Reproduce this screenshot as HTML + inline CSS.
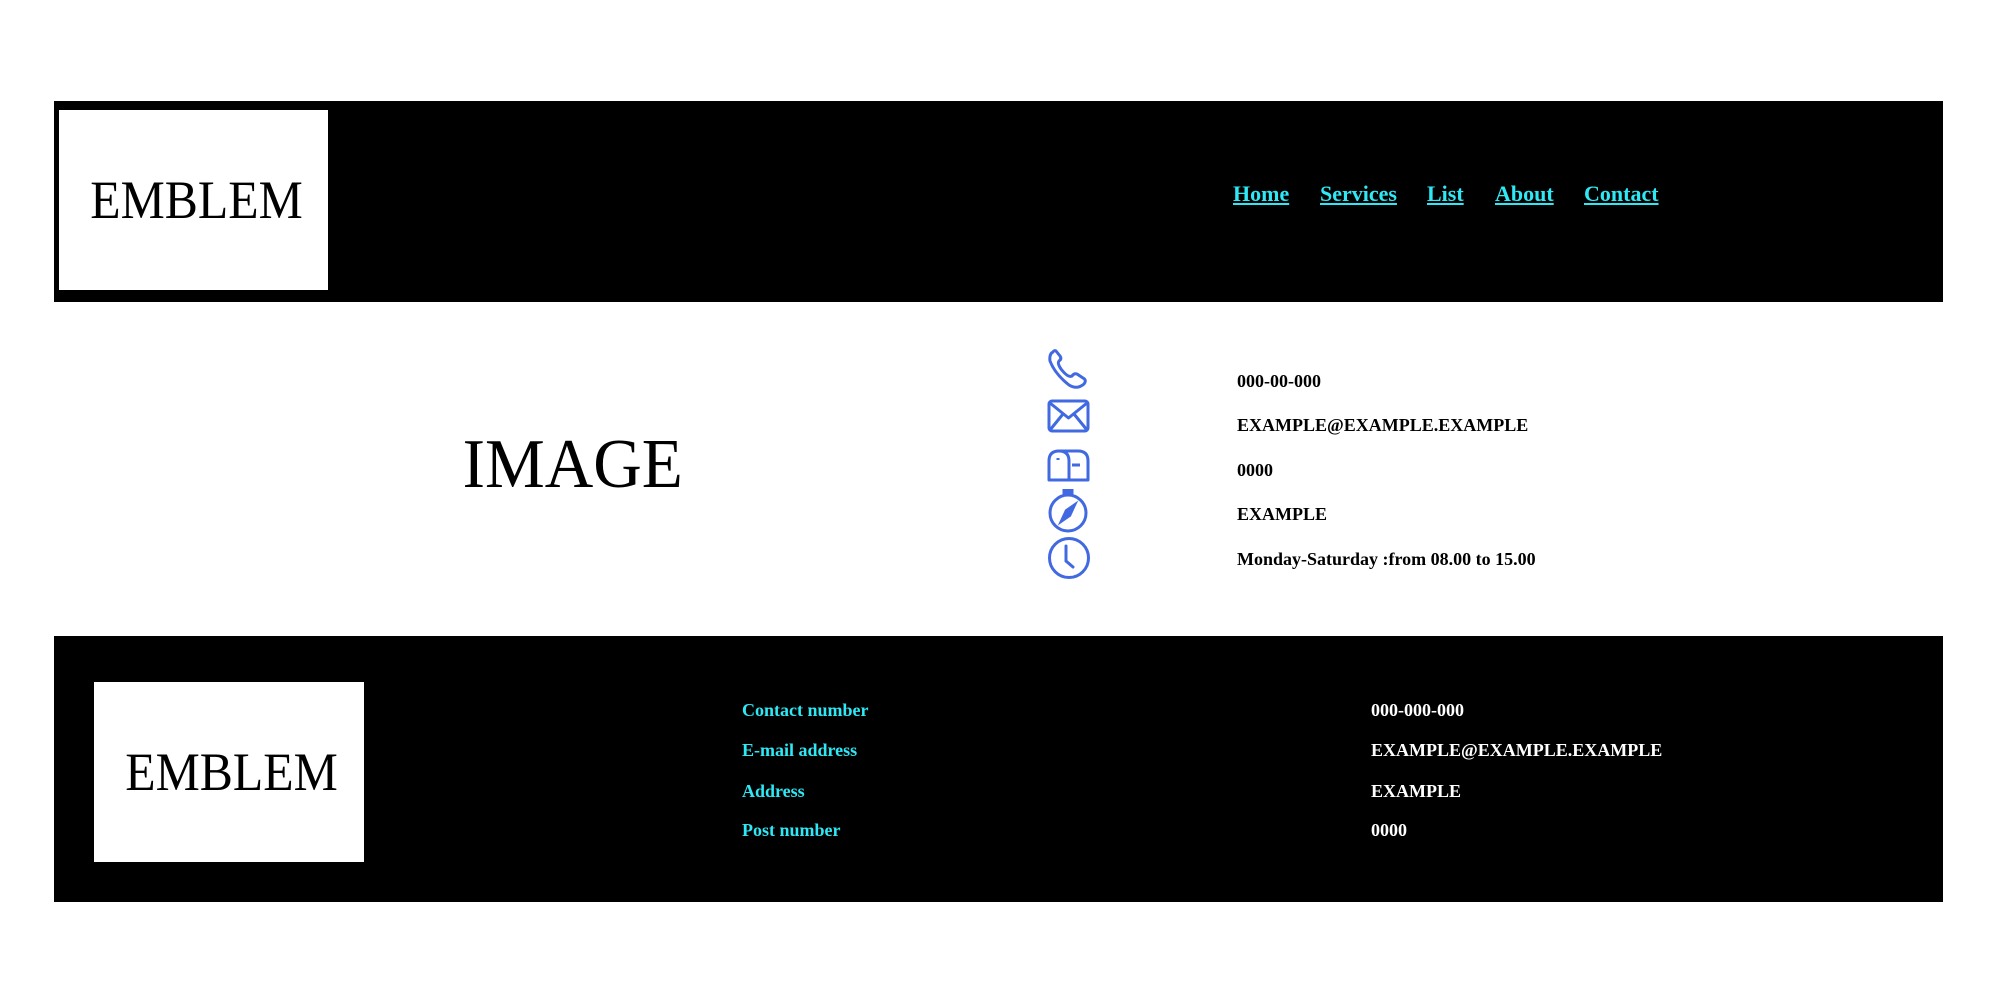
<!DOCTYPE html>
<html><head><meta charset="utf-8"><style>
*{margin:0;padding:0;box-sizing:border-box}
body{width:2000px;height:1000px;background:#fff;position:relative;overflow:hidden;font-family:"Liberation Serif",serif}
.abs{position:absolute}
.blk{background:#000}
.logo{background:#fff;display:flex;align-items:center;justify-content:center;font-size:54px;color:#000;padding-left:6px}
.logo span{display:inline-block;transform:scaleX(0.92)}
.nav a{position:absolute;top:181px;color:#2ee8f5;font-weight:bold;font-size:22px;text-decoration:underline;white-space:nowrap}
.t{position:absolute;font-weight:bold;font-size:18px;white-space:nowrap;line-height:20px}
.ic{position:absolute;left:1047px}
</style></head><body>
<div class="abs blk" style="left:54px;top:101px;width:1889px;height:201px"></div>
<div class="abs logo" style="left:59px;top:110px;width:269px;height:180px"><span>EMBLEM</span></div>
<div class="nav">
<a style="left:1233px">Home</a>
<a style="left:1320px">Services</a>
<a style="left:1427px">List</a>
<a style="left:1495px">About</a>
<a style="left:1584px">Contact</a>
</div>
<div class="abs" style="left:402px;top:422px;width:342px;text-align:center;font-size:70px;line-height:86px"><span style="display:inline-block;transform:scaleX(0.96)">IMAGE</span></div>

<svg class="ic" style="top:348px" width="42" height="42" viewBox="0 0 42 42" fill="none" stroke="#4169e1" stroke-width="3" stroke-linejoin="round" stroke-linecap="round"><path d="M6 4 Q2 6 3 13 Q8 26 22 37 Q30 42 37 36 Q40 32 36 30 L30 26 Q27 25 25 28 Q21 30 14 21 Q10 15 12 13 Q15 11 13 8 L9 3 Q7 2 6 4Z"/></svg>
<svg class="ic" style="top:399px" width="43" height="34" viewBox="0 0 43 34" fill="none" stroke="#4169e1" stroke-width="3" stroke-linejoin="round"><rect x="2" y="2" width="39" height="30" rx="3"/><path d="M3 4 L21.5 19 L40 4 M3 31 L16 15 M40 31 L27 15"/></svg>
<svg class="ic" style="top:449px" width="43" height="33" viewBox="0 0 43 33" fill="none" stroke="#4169e1" stroke-width="3" stroke-linejoin="round"><path d="M2 31 V12 Q2 2 12 2 H31 Q41 2 41 12 V31 Z M22 31 V12 Q22 2 12 2"/><path d="M11 11 V9" /><path d="M25 16 H33" /></svg>
<svg class="ic" style="top:489px" width="42" height="44" viewBox="0 0 42 44" fill="none" stroke="#4169e1" stroke-width="3"><circle cx="21" cy="24" r="18"/><rect x="17" y="1" width="8" height="3" fill="#4169e1"/><path d="M30 13 L23.5 27 L12 35 L18.5 21 Z" fill="#4169e1" stroke-width="1"/></svg>
<svg class="ic" style="top:536px" width="44" height="44" viewBox="0 0 44 44" fill="none" stroke="#4169e1" stroke-width="3" stroke-linecap="round"><circle cx="22" cy="22" r="19.5"/><path d="M19 10 V25 L26 31"/></svg>

<div class="t" style="left:1237px;top:371px">000-00-000</div>
<div class="t" style="left:1237px;top:415px">EXAMPLE@EXAMPLE.EXAMPLE</div>
<div class="t" style="left:1237px;top:460px">0000</div>
<div class="t" style="left:1237px;top:504px">EXAMPLE</div>
<div class="t" style="left:1237px;top:549px">Monday-Saturday :from 08.00 to 15.00</div>

<div class="abs blk" style="left:54px;top:636px;width:1889px;height:266px"></div>
<div class="abs logo" style="left:94px;top:682px;width:270px;height:180px"><span>EMBLEM</span></div>
<div class="t" style="left:742px;top:700px;color:#2ee8f5">Contact number</div>
<div class="t" style="left:742px;top:740px;color:#2ee8f5">E-mail address</div>
<div class="t" style="left:742px;top:781px;color:#2ee8f5">Address</div>
<div class="t" style="left:742px;top:820px;color:#2ee8f5">Post number</div>
<div class="t" style="left:1371px;top:700px;color:#fff">000-000-000</div>
<div class="t" style="left:1371px;top:740px;color:#fff">EXAMPLE@EXAMPLE.EXAMPLE</div>
<div class="t" style="left:1371px;top:781px;color:#fff">EXAMPLE</div>
<div class="t" style="left:1371px;top:820px;color:#fff">0000</div>
</body></html>
